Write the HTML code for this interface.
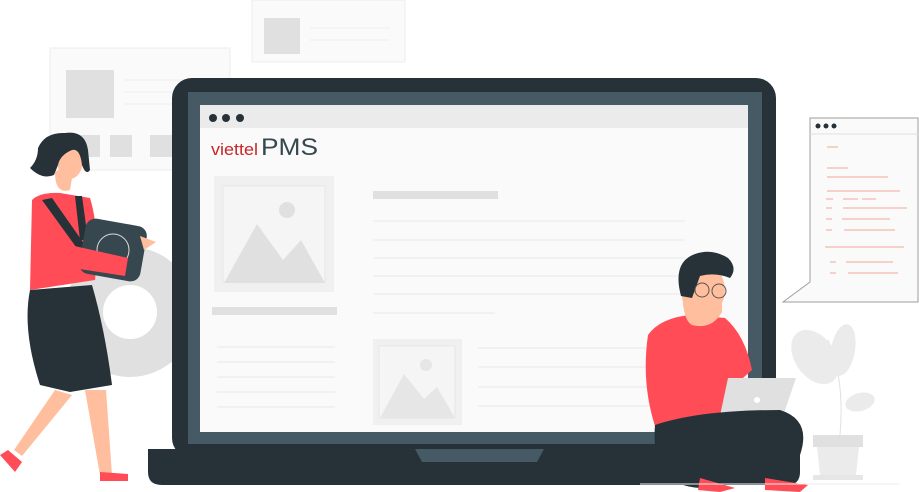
<!DOCTYPE html>
<html><head><meta charset="utf-8"><style>
html,body{margin:0;padding:0;background:#fff;width:919px;height:492px;overflow:hidden}
svg{display:block}
</style></head><body>
<svg width="919" height="492" viewBox="0 0 919 492" xmlns="http://www.w3.org/2000/svg">
<defs><linearGradient id="sep" x1="0" x2="1"><stop offset="0" stop-color="#999"/><stop offset="0.5" stop-color="#333"/><stop offset="1" stop-color="#bbb"/></linearGradient></defs>
<rect x="50" y="48" width="180" height="122" fill="#fafafa" stroke="#ececec"/>
<rect x="66" y="70" width="48" height="48" fill="#e0e0e0"/>
<line x1="124" y1="80" x2="205" y2="80" stroke="#eee"/><line x1="124" y1="92" x2="205" y2="92" stroke="#eee"/><line x1="124" y1="104" x2="205" y2="104" stroke="#eee"/>
<rect x="78" y="135" width="22" height="22" fill="#e0e0e0"/><rect x="110" y="135" width="22" height="22" fill="#e0e0e0"/><rect x="150" y="135" width="22" height="22" fill="#e0e0e0"/>
<rect x="252" y="0" width="153" height="62" fill="#fafafa" stroke="#ececec"/>
<rect x="264" y="18" width="36" height="36" fill="#e0e0e0"/>
<line x1="310" y1="28" x2="390" y2="28" stroke="#eee"/><line x1="310" y1="40" x2="390" y2="40" stroke="#eee"/>
<circle cx="130" cy="312" r="65" fill="#e0e0e0"/><circle cx="130" cy="312" r="27" fill="#fff"/>
<path d="M810 118 H918 V302 H783 L810 282 Z" fill="#fafafa" stroke="#9e9e9e"/>
<line x1="810" y1="134" x2="918" y2="134" stroke="#e0e0e0"/>
<circle cx="818" cy="126" r="2.5" fill="#263238"/><circle cx="826" cy="126" r="2.5" fill="#263238"/><circle cx="834" cy="126" r="2.5" fill="#263238"/>
<g stroke="#f4a898" stroke-width="1">
<line x1="827" y1="147" x2="838" y2="147"/><line x1="827" y1="168" x2="848" y2="168"/><line x1="827" y1="177" x2="888" y2="177"/>
<line x1="827" y1="191" x2="900" y2="191"/><line x1="826" y1="199" x2="833" y2="199"/><line x1="843" y1="199" x2="858" y2="199"/><line x1="862" y1="199" x2="876" y2="199"/>
<line x1="826" y1="208" x2="832" y2="208"/><line x1="843" y1="208" x2="907" y2="208"/><line x1="826" y1="219" x2="832" y2="219"/><line x1="842" y1="219" x2="890" y2="219"/>
<line x1="826" y1="230" x2="832" y2="230"/><line x1="844" y1="230" x2="895" y2="230"/><line x1="825" y1="247" x2="904" y2="247"/>
<line x1="830" y1="262" x2="836" y2="262"/><line x1="846" y1="262" x2="893" y2="262"/><line x1="830" y1="273" x2="836" y2="273"/><line x1="848" y1="273" x2="898" y2="273"/></g>
<rect x="172" y="78" width="604" height="380" rx="20" fill="#263238"/>
<rect x="188" y="92" width="574" height="352" fill="#455a64"/>
<rect x="200" y="105" width="548" height="327" fill="#f5f5f5"/>
<rect x="200" y="105" width="548" height="23" fill="#ebebeb"/>
<circle cx="213" cy="118" r="4" fill="#263238"/><circle cx="226" cy="118" r="4" fill="#263238"/><circle cx="240" cy="118" r="4" fill="#263238"/>
<rect x="200" y="128" width="548" height="304" fill="#fafafa"/>
<text x="211" y="155" font-family="Liberation Sans, sans-serif" font-size="17" fill="#c62828" textLength="47" lengthAdjust="spacingAndGlyphs">viettel</text>
<text x="261" y="155" font-family="Liberation Sans, sans-serif" font-size="24" fill="#37474f" textLength="57" lengthAdjust="spacingAndGlyphs">PMS</text>
<line x1="207" y1="165" x2="730" y2="165" stroke="url(#sep)" stroke-width="1.5"/>
<rect x="214" y="176" width="120" height="116" fill="#f0f0f0"/>
<rect x="223" y="186" width="102" height="96" fill="#f5f5f5" stroke="#e6e6e6"/>
<circle cx="287" cy="210" r="8" fill="#e0e0e0"/>
<path d="M224 283 L257 224 L283 260 L301 240 L325 283 Z" fill="#e0e0e0"/>
<rect x="212" y="307" width="125" height="8" fill="#e0e0e0"/>
<g stroke="#e8e8e8"><line x1="217" y1="347" x2="335" y2="347"/><line x1="217" y1="362" x2="335" y2="362"/><line x1="217" y1="377" x2="335" y2="377"/><line x1="217" y1="392" x2="335" y2="392"/><line x1="217" y1="407" x2="335" y2="407"/>
<line x1="373" y1="221" x2="685" y2="221"/><line x1="373" y1="240" x2="685" y2="240"/><line x1="373" y1="258" x2="685" y2="258"/><line x1="373" y1="276" x2="685" y2="276"/><line x1="373" y1="294" x2="685" y2="294"/><line x1="373" y1="313" x2="495" y2="313"/>
<line x1="478" y1="348" x2="660" y2="348"/><line x1="478" y1="367" x2="660" y2="367"/><line x1="478" y1="387" x2="660" y2="387"/><line x1="478" y1="406" x2="660" y2="406"/></g>
<rect x="373" y="191" width="125" height="8" fill="#e0e0e0"/>
<rect x="373" y="339" width="89" height="86" fill="#f0f0f0"/>
<rect x="379" y="346" width="76" height="72" fill="#f5f5f5" stroke="#e6e6e6"/>
<circle cx="426" cy="365" r="6" fill="#e6e6e6"/>
<path d="M380 418 L404 374 L424 399 L437 387 L455 418 Z" fill="#e6e6e6"/>
<path d="M148 449 H800 V472 Q800 485 787 485 H162 Q148 485 148 472 Z" fill="#263238"/>
<path d="M415 449 H544 L537 462 H422 Z" fill="#455a64"/>
<!-- woman -->
<path d="M32 200 Q40 192 60 193 L90 198 Q100 230 95 280 L30 290 Z" fill="#ff4c57"/>
<path d="M42 200 L52 198 L85 245 L84 258 Z" fill="#263238"/>
<path d="M75 196 L82 196 L88 240 L80 240 Z" fill="#263238"/>
<path d="M30 290 Q22 330 40 385 L70 392 L112 385 Q105 330 92 285 Z" fill="#263238"/>
<path d="M55 390 L14 450 L22 456 L72 395 Z" fill="#ffbe9d"/>
<path d="M85 390 L100 475 L112 475 L106 390 Z" fill="#ffbe9d"/>
<path d="M0 455 L15 472 L22 462 L8 450 Z" fill="#ff4c57"/>
<path d="M100 472 L128 474 L128 481 L100 481 Z" fill="#ff4c57"/>
<path d="M55 172 Q55 195 70 190 L75 160 Z" fill="#ffbe9d"/>
<ellipse cx="70" cy="160" rx="13" ry="19" fill="#ffbe9d"/>
<path d="M30 168 Q38 160 38 148 Q45 132 65 133 Q85 130 88 150 L90 170 Q86 176 82 165 Q80 148 72 150 Q60 155 58 165 L54 175 Q42 180 30 168 Z" fill="#263238"/>
<rect x="82" y="222" width="62" height="56" rx="10" fill="#37474f" transform="rotate(10 113 250)"/>
<circle cx="113" cy="250" r="16" fill="none" stroke="#ddd"/>
<path d="M35 210 Q25 262 60 266 L125 276 L128 258 L70 245 Z" fill="#ff4c57"/>
<path d="M140 236 L156 242 L144 250 Z" fill="#ffbe9d"/>
<!-- man -->
<path d="M648 335 Q660 318 690 315 L725 318 Q745 335 752 370 L735 385 L720 440 L660 440 Q640 390 648 335 Z" fill="#ff4c57"/>
<path d="M682 285 Q682 320 692 325 Q712 330 722 312 L722 275 Z" fill="#ffbe9d"/>
<ellipse cx="703" cy="290" rx="22" ry="25" fill="#ffbe9d"/>
<path d="M681 296 Q672 262 695 254 Q712 248 728 258 Q738 268 730 278 Q715 272 700 276 L692 298 Z" fill="#263238"/>
<circle cx="702" cy="290" r="7" fill="none" stroke="#555"/><circle cx="719" cy="291" r="7" fill="none" stroke="#555"/>
<path d="M728 378 H796 L780 425 H718 Z" fill="#e0e0e0"/>
<circle cx="757" cy="400" r="3" fill="#fff"/>
<path d="M655 425 Q700 410 780 410 Q812 420 800 455 Q750 482 700 488 Q650 485 655 425 Z" fill="#263238"/>
<path d="M700 478 L735 488 L720 492 L698 490 Z" fill="#ff4c57"/>
<path d="M765 478 L808 485 L800 492 L765 490 Z" fill="#ff4c57"/>
<!-- plant -->
<path d="M840 435 Q845 380 828 340" stroke="#e0e0e0" fill="none"/>
<ellipse cx="815" cy="357" rx="20" ry="30" fill="#ebebeb" transform="rotate(-35 815 357)"/>
<ellipse cx="843" cy="350" rx="12" ry="26" fill="#ebebeb" transform="rotate(10 843 350)"/>
<ellipse cx="860" cy="402" rx="15" ry="9" fill="#ebebeb" transform="rotate(-15 860 402)"/>
<rect x="813" y="435" width="50" height="12" fill="#e0e0e0"/>
<path d="M817 447 H859 L856 475 H820 Z" fill="#ebebeb"/>
<rect x="813" y="475" width="50" height="5" fill="#e6e6e6"/>
<line x1="640" y1="484" x2="900" y2="484" stroke="#eee"/>
</svg>
</body></html>
